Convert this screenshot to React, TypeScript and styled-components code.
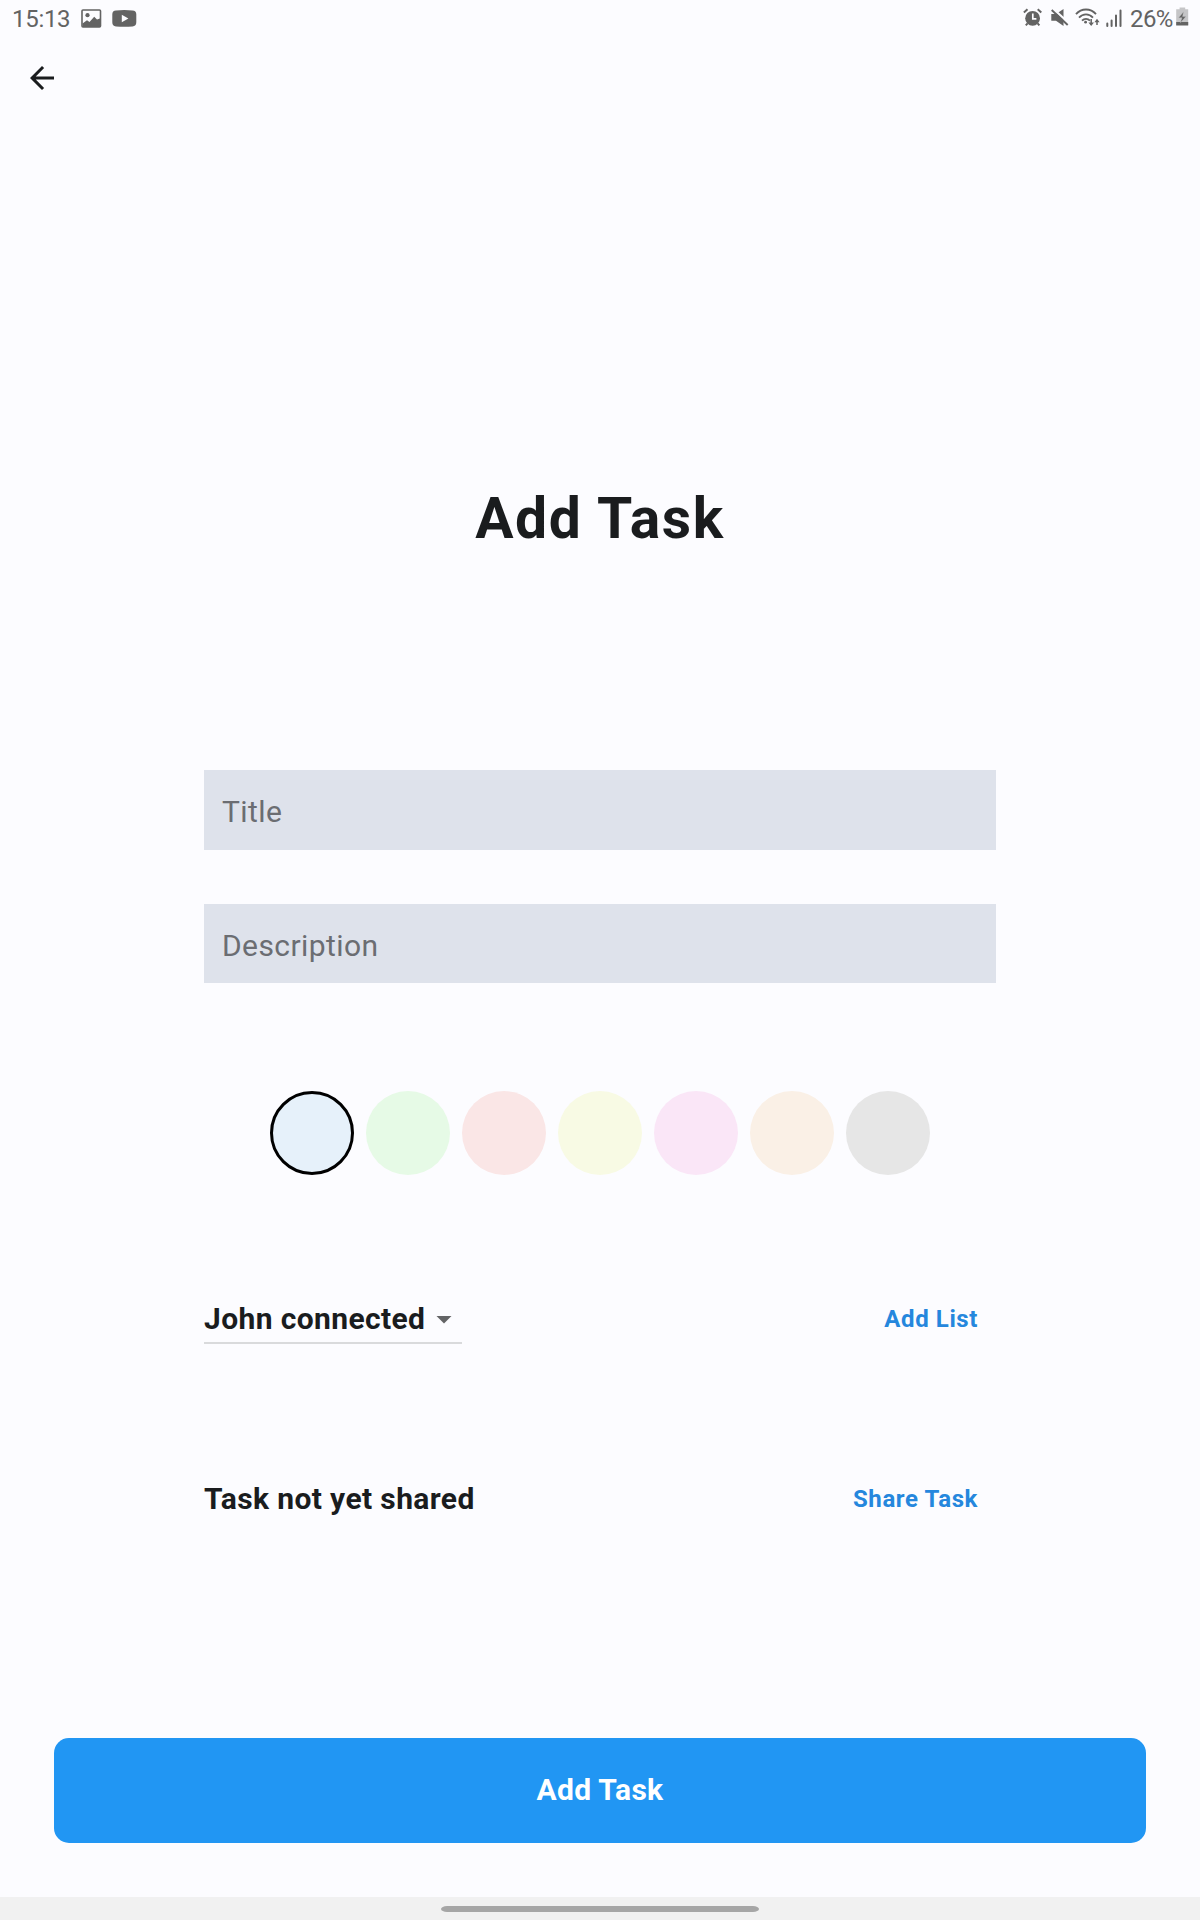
import React, { useState } from "react";
import styled, { createGlobalStyle } from "styled-components";

const GlobalStyle = createGlobalStyle`
  *, *::before, *::after { box-sizing: border-box; }
  html, body { margin: 0; padding: 0; background: #fcfcff; }
  body { font-family: Roboto, "Noto Sans", sans-serif; color: #1a1c1e; }
  button, input { font-family: inherit; margin: 0; border: 0; padding: 0; }
  svg { display: block; flex: none; }
`;

const Screen = styled.div`
  width: 1200px;
  height: 1920px;
  display: flex;
  flex-direction: column;
  background: #fcfcff;
  overflow: hidden;
`;

const StatusBar = styled.header`
  height: 36px;
  padding: 0 11px 0 12px;
  display: flex;
  justify-content: space-between;
  color: #636363;
`;

const StatusGroup = styled.div`
  display: flex;
  align-items: flex-start;
`;

const StatusText = styled.span<{ $width: number; $inset?: number; $spacing?: number }>`
  width: ${(p) => p.$width}px;
  padding-left: ${(p) => p.$inset ?? 0}px;
  font-size: 24px;
  line-height: 38px;
  letter-spacing: ${(p) => p.$spacing ?? 0}px;
  white-space: nowrap;
`;

const AppBar = styled.div`
  height: 84px;
  padding-left: 24px;
  display: flex;
  align-items: center;
`;

const BackButton = styled.button`
  width: 36px;
  height: 36px;
  background: none;
  color: #1a1c1e;
`;

const Heading = styled.h1`
  margin: 363px 0 0;
  height: 72px;
  text-align: center;
  font-size: 57px;
  line-height: 72px;
  font-weight: 700;
  letter-spacing: 1.65px;
`;

const Form = styled.main`
  width: 792px;
  margin: 215px auto 0;
  display: flex;
  flex-direction: column;
`;

const Fields = styled.div`
  display: flex;
  flex-direction: column;
  gap: 54px;
`;

const Field = styled.input`
  width: 100%;
  height: 79.5px;
  padding: 4px 18px 0;
  border-radius: 0;
  outline: none;
  background: #dee2eb;
  color: #1a1c1e;
  font-size: 30px;
  letter-spacing: 0.42px;
  &::placeholder { color: #6b6d72; opacity: 1; }
`;

const Swatches = styled.div`
  margin-top: 108px;
  display: flex;
  justify-content: center;
  gap: 12px;
`;

const Swatch = styled.button<{ $color: string; $selected: boolean }>`
  width: 84px;
  height: 84px;
  border-radius: 50%;
  background: ${(p) => p.$color};
  border: ${(p) => (p.$selected ? "3px solid #000" : "0")};
`;

const OptionRow = styled.div<{ $top: number }>`
  margin-top: ${(p) => p.$top}px;
  height: 72px;
  padding-right: 18px;
  display: flex;
  align-items: center;
  justify-content: space-between;
`;

const optionText = `
  font-size: 30px;
  line-height: 36px;
  font-weight: 700;
  letter-spacing: 0.38px;
  white-space: nowrap;
`;

const Dropdown = styled.button`
  ${optionText}
  width: 258px;
  height: 50px;
  padding-top: 2px;
  border-bottom: 2px solid #d9dadc;
  display: flex;
  align-items: center;
  justify-content: space-between;
  background: none;
  color: #1a1c1e;
`;

const OptionLabel = styled.span`
  ${optionText}
`;

const TextButton = styled.button`
  background: none;
  color: #2587dd;
  font-size: 24px;
  line-height: 30px;
  font-weight: 700;
  letter-spacing: 0.6px;
  white-space: nowrap;
`;

const SubmitButton = styled.button`
  margin: 203px 54px 0;
  height: 105px;
  padding-bottom: 2px;
  border-radius: 15px;
  background: #2196f3;
  color: #fff;
  font-size: 30px;
  font-weight: 700;
  letter-spacing: 0.3px;
`;

const NavBar = styled.footer`
  margin-top: auto;
  height: 23px;
  padding-top: 9px;
  background: #f1f1f1;
  display: flex;
  justify-content: center;
`;

const NavHandle = styled.div`
  width: 318px;
  height: 6px;
  border-radius: 6px / 3px;
  background: #a6a6a6;
`;

const StatusIcon = styled.svg<{ $left?: number; $top: number }>`
  margin-left: ${(p) => p.$left ?? 0}px;
  margin-top: ${(p) => p.$top}px;
`;

const PictureIcon = () => (
  <StatusIcon $top={9} width="21" height="19" viewBox="0 0 21 19">
    <rect x="1" y="1" width="18.5" height="17" rx="1" fill="none" stroke="currentColor" strokeWidth="1.6" />
    <circle cx="6.5" cy="6.2" r="2.1" fill="currentColor" />
    <path d="M1.5 14.5 6 11.2 8.5 13 13.2 7.7 16 10.4 19 9.6V18H1.5Z" fill="currentColor" />
  </StatusIcon>
);

const VideoIcon = () => (
  <StatusIcon $left={10} $top={10} width="25" height="17" viewBox="0 0 25 17">
    <path
      fill="currentColor"
      fillRule="evenodd"
      d="M4 .4Q12.3-.3 20.5.4 24.3.6 24.3 4.3V12.3Q24.3 16 20.5 16.4 12.3 17 4 16.4 .3 16 .3 12.3V4.3Q.3.6 4 .4ZM9.8 4.8V12.2L16.4 8.5Z"
    />
  </StatusIcon>
);

const AlarmIcon = () => (
  <StatusIcon $top={8} width="20" height="20" viewBox="0 0 20 20">
    <circle cx="9.6" cy="10.3" r="7.4" fill="currentColor" />
    <path d="M.9 4.5 4.5 1.3M18.3 4.5 14.7 1.3M2.8 17.4 4.6 15.4M16.4 17.4 14.6 15.4" stroke="currentColor" strokeWidth="2" fill="none" />
    <path d="M9.8 5.6V10.8H13.4" stroke="#fcfcff" strokeWidth="1.7" fill="none" />
  </StatusIcon>
);

const MuteIcon = () => (
  <StatusIcon $left={8} $top={8} width="18" height="19" viewBox="0 0 18 19">
    <path d="M.3 6H5L12.5 1V18L5 12.8H.3Z" fill="currentColor" />
    <path d="M2 .6 18.2 15.4" stroke="#fcfcff" strokeWidth="2.2" />
    <path d="M.7 2 16.7 17" stroke="currentColor" strokeWidth="1.9" />
  </StatusIcon>
);

const WifiIcon = () => (
  <StatusIcon $left={6} $top={8} width="26" height="20" viewBox="0 0 26 20">
    <g fill="none" stroke="currentColor" strokeWidth="1.8">
      <path d="M1 6.2C6.5-.1 15.5-.1 21 6.2" />
      <path d="M4 9.6C8 5.2 14 5.2 18 9.6" />
      <path d="M7 12.6C9.3 10.2 12.7 10.2 15 12.6" />
      <path d="M16.2 11V17M22 17V12" strokeWidth="1.5" />
    </g>
    <circle cx="10.6" cy="14.2" r="1.4" fill="currentColor" />
    <path d="M13.4 14.4H19L16.2 18ZM19.4 14.2H24.6L22 10.8Z" fill="currentColor" />
  </StatusIcon>
);

const SignalIcon = () => (
  <StatusIcon $left={5} $top={9} width="16" height="19" viewBox="0 0 16 19">
    <path
      d="M1.3 14.6V17M5.6 11.4V17M10 6.6V17M14.5 1.6V17"
      stroke="currentColor"
      strokeWidth="2"
      strokeLinecap="round"
    />
  </StatusIcon>
);

const BatteryIcon = () => (
  <StatusIcon $top={7} width="13" height="19" viewBox="0 0 13 19">
    <path d="M3.6 .4H9.2V2.2H12.2V18.4H.2V2.2H3.6Z" fill="#c5c5c7" />
    <path d="M.2 15H12.2V18.4H.2Z" fill="currentColor" />
    <path d="M7.6 4.8 2.6 10.8H6L4.4 15.8 9.9 9.6H6.6Z" fill="currentColor" stroke="#c5c5c7" strokeWidth=".35" />
  </StatusIcon>
);

const ArrowBack = () => (
  <svg width="36" height="36" viewBox="0 0 24 24" fill="currentColor">
    <path d="M20 11H7.83l5.59-5.59L12 4l-8 8 8 8 1.41-1.41L7.83 13H20v-2z" />
  </svg>
);

const Caret = () => (
  <svg width="36" height="36" viewBox="0 0 24 24" fill="#636466">
    <path d="M7 10l5 5 5-5z" />
  </svg>
);

const colors = ["#e6f1fa", "#e6fae6", "#fae6e6", "#f8fae4", "#fae6f7", "#faf0e6", "#e6e6e6"];

export default function App() {
  const [selected, setSelected] = useState(0);
  return (
    <Screen>
      <GlobalStyle />
      <StatusBar>
        <StatusGroup>
          <StatusText $width={69} $spacing={-0.3}>15:13</StatusText>
          <PictureIcon />
          <VideoIcon />
        </StatusGroup>
        <StatusGroup>
          <AlarmIcon />
          <MuteIcon />
          <WifiIcon />
          <SignalIcon />
          <StatusText $width={54} $inset={8} $spacing={-0.6}>26%</StatusText>
          <BatteryIcon />
        </StatusGroup>
      </StatusBar>
      <AppBar>
        <BackButton aria-label="Back">
          <ArrowBack />
        </BackButton>
      </AppBar>
      <Heading>Add Task</Heading>
      <Form>
        <Fields>
          <Field placeholder="Title" />
          <Field placeholder="Description" />
        </Fields>
        <Swatches>
          {colors.map((color, i) => (
            <Swatch
              key={color}
              $color={color}
              $selected={i === selected}
              onClick={() => setSelected(i)}
              aria-label={`Color ${i + 1}`}
            />
          ))}
        </Swatches>
        <OptionRow $top={108}>
          <Dropdown>
            John connected
            <Caret />
          </Dropdown>
          <TextButton>Add List</TextButton>
        </OptionRow>
        <OptionRow $top={108}>
          <OptionLabel>Task not yet shared</OptionLabel>
          <TextButton>Share Task</TextButton>
        </OptionRow>
      </Form>
      <SubmitButton>Add Task</SubmitButton>
      <NavBar>
        <NavHandle />
      </NavBar>
    </Screen>
  );
}
